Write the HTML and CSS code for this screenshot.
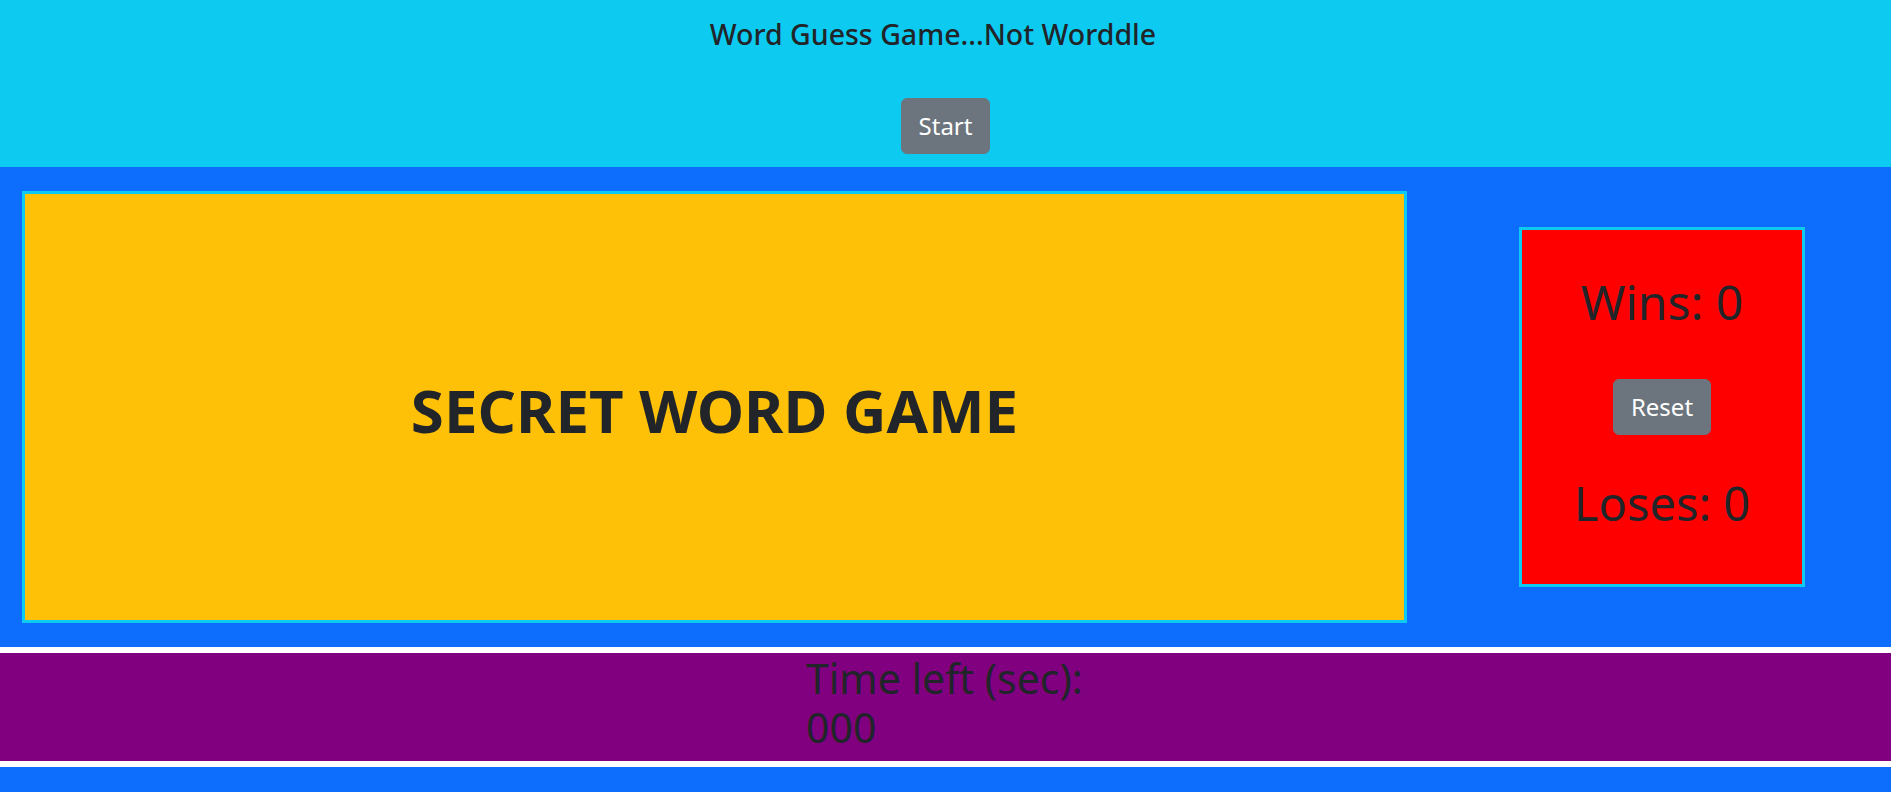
FILE: index.html
```html
<!DOCTYPE html>
<html lang="en">
<head>
<meta charset="utf-8">
<title>Word Guess Game</title>
<link rel="stylesheet" href="styles.css">
</head>
<body>
<header class="top">
  <h1 class="title">Word Guess Game...Not Worddle</h1>
  <button class="btn btn-start" type="button">Start</button>
</header>
<main class="board">
  <section class="word-box">
    <h2 class="secret">SECRET WORD GAME</h2>
  </section>
  <aside class="score-box">
    <h2 class="score score-wins">Wins: 0</h2>
    <button class="btn btn-reset" type="button">Reset</button>
    <h2 class="score score-loses">Loses: 0</h2>
  </aside>
</main>
<section class="timer-bar">
  <h3 class="timer">Time left (sec): <span class="timer-count">000</span></h3>
</section>
</body>
</html>
```
FILE: styles.css
```css
html, body {
  margin: 0;
  padding: 0;
}
body {
  background: #0d6efd;
  font-family: "Noto Sans", "Open Sans", "Liberation Sans", sans-serif;
  color: #212529;
  height: 792px;
  overflow: hidden;
}
.top {
  background: #0dcaf0;
  height: 167px;
  box-sizing: border-box;
  padding-top: 18px;
  display: flex;
  flex-direction: column;
  align-items: center;
}
.title {
  margin: 0;
  font-size: 28.5px;
  line-height: 33.6px;
  font-weight: 500;
  padding-right: 25px;
}
.btn {
  font-family: inherit;
  font-size: 24px;
  line-height: 36px;
  padding: 9px 17px;
  border: 1px solid #6c757d;
  background: #6c757d;
  color: #fff;
  border-radius: 6px;
  cursor: pointer;
}
.btn-start {
  margin-top: 46px;
}
.board {
  display: flex;
  align-items: center;
  height: 480px;
  box-sizing: border-box;
  padding: 24px 0 24px 22px;
  gap: 112px;
}
.word-box {
  width: 1385px;
  height: 432px;
  box-sizing: border-box;
  border: 3px solid #0dcaf0;
  background: #ffc107;
  display: flex;
  align-items: center;
  justify-content: center;
}
.secret {
  margin: 0;
  font-size: 60px;
  line-height: 72px;
  font-weight: 700;
  padding-top: 6px;
}
.score-box {
  width: 286px;
  height: 360px;
  box-sizing: border-box;
  border: 3px solid #0dcaf0;
  background: #ff0000;
  display: flex;
  flex-direction: column;
  align-items: center;
  padding-top: 43px;
}
.score {
  margin: 0;
  font-size: 48px;
  line-height: 57.6px;
  font-weight: 400;
}
.score-loses {
  font-size: 47px;
}
.btn-reset {
  margin-top: 48px;
  margin-bottom: 40px;
}
.timer-bar {
  background: #800080;
  height: 108px;
  border-top: 6px solid #fff;
  border-bottom: 6px solid #fff;
}
.timer {
  margin: 0 0 0 806px;
  width: 300px;
  font-size: 41px;
  line-height: 49.4px;
  font-weight: 400;
  padding-top: 1px;
}
```
